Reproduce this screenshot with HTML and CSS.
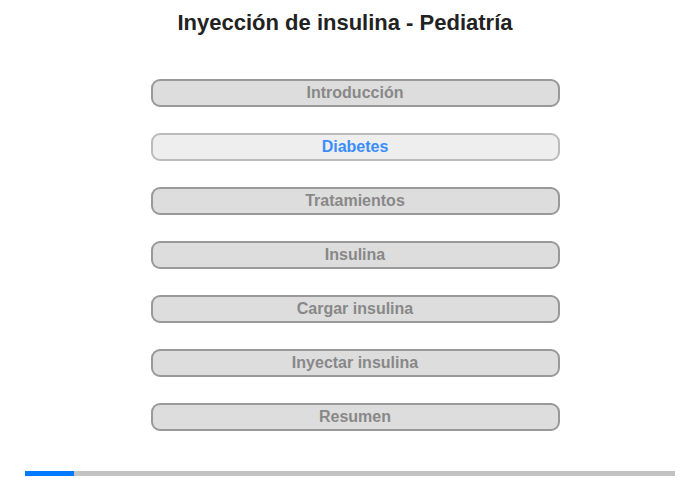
FILE: index.html
```html
<!DOCTYPE html>
<html lang="es">
<head>
  <meta charset="UTF-8">
  <title>Inyección de insulina - Pediatría</title>
  <link rel="stylesheet" href="styles.css">
</head>
<body>
  <div class="page">
    <h1>Inyección de insulina - Pediatría</h1>
    <!-- Menu -->
    <div class="menu">
      <div class="menu-item">Introducción</div>
      <div class="menu-item active">Diabetes</div>
      <div class="menu-item">Tratamientos</div>
      <div class="menu-item">Insulina</div>
      <div class="menu-item">Cargar insulina</div>
      <div class="menu-item">Inyectar insulina</div>
      <div class="menu-item">Resumen</div>
    </div>
    <!-- Progress -->
    <div class="progress">
      <div class="progress-fill" style="width: 49px"></div>
    </div>
  </div>
</body>
</html>
```

FILE: styles.css
```css
body {
  font-family: "Liberation Sans", Arial, sans-serif;
  background-color: #fff;
  margin: 0;
  padding: 0;
}
.page {
  width: 700px;
  height: 480px;
  display: flex;
  flex-direction: column;
  align-items: center;
}
h1 {
  font-size: 22px;
  font-weight: bold;
  color: #222;
  margin: 10px 10px 0 0;
  line-height: 26px;
}
.menu {
  display: flex;
  flex-direction: column;
  gap: 26px;
  margin: 43px 0 0 10px;
}
.menu-item {
  width: 405px;
  height: 24px;
  line-height: 24px;
  border: 2px solid #999;
  border-radius: 9px;
  background-color: #ddd;
  color: #888;
  font-size: 16px;
  font-weight: bold;
  text-align: center;
}
.menu-item.active {
  border-color: #bbb;
  background-color: #eee;
  color: #3a8dff;
}
.progress {
  width: 650px;
  height: 5px;
  background-color: #c3c3c3;
  margin-top: 40px;
}
.progress-fill {
  height: 100%;
  background-color: #007bff;
}
```
